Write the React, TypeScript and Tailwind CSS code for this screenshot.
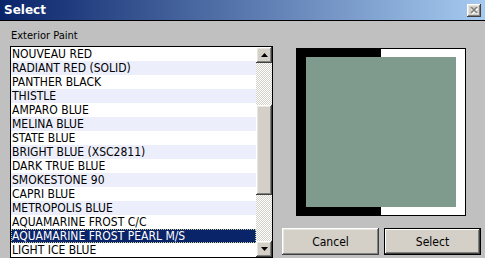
import React from 'react';

const paints = [
  'NOUVEAU RED',
  'RADIANT RED (SOLID)',
  'PANTHER BLACK',
  'THISTLE',
  'AMPARO BLUE',
  'MELINA BLUE',
  'STATE BLUE',
  'BRIGHT BLUE (XSC2811)',
  'DARK TRUE BLUE',
  'SMOKESTONE 90',
  'CAPRI BLUE',
  'METROPOLIS BLUE',
  'AQUAMARINE FROST C/C',
  'AQUAMARINE FROST PEARL M/S',
  'LIGHT ICE BLUE',
];

const selectedIndex = 13;

const bevel =
  'shadow-[inset_-1px_-1px_#404040,inset_1px_1px_#ffffff,inset_-2px_-2px_#808080,inset_2px_2px_#e8e6e0]';

const ScrollArrow: React.FC<{ up?: boolean }> = ({ up }) => (
  <div className={`w-[16px] h-[16px] bg-[#d4d0c8] flex items-center justify-center ${bevel}`}>
    <svg width="7" height="4" viewBox="0 0 7 4">
      {up ? <path d="M3.5 0 L7 4 L0 4 Z" fill="#000" /> : <path d="M0 0 L7 0 L3.5 4 Z" fill="#000" />}
    </svg>
  </div>
);

export default function App() {
  return (
    <div className="w-[485px] h-[258px] bg-[#c0c0c0] flex flex-col overflow-hidden font-['DejaVu_Sans_Condensed','DejaVu_Sans',sans-serif] font-stretch-condensed text-black">
      {/* title bar */}
      <div className="h-[20px] shrink-0 flex items-center justify-between pl-[4px] pr-[4px] bg-[linear-gradient(to_right,#0a246a,#a6caf0)] border-b border-black box-content">
        <span className="text-white font-bold text-[12px] font-['DejaVu_Sans',sans-serif] font-stretch-normal leading-none">Select</span>
        <div className={`w-[14px] h-[13px] bg-[#d4d0c8] flex items-center justify-center ${bevel}`}>
          <svg width="8" height="7" viewBox="0 0 8 7">
            <path d="M1 1 L7 7 M7 1 L1 7" stroke="#ffffff" strokeWidth="1.6" transform="translate(0.6 0.4)" />
            <path d="M1 0 L7 6 M7 0 L1 6" stroke="#808080" strokeWidth="1.6" />
          </svg>
        </div>
      </div>

      <div className="flex flex-1">
        {/* list column */}
        <div className="pl-[10px] pt-[7px] flex flex-col">
          <div className="text-[11px] leading-[16px] h-[18px] pl-[1px]">Exterior Paint</div>
          <div className="w-[263px] h-[212px] border border-black bg-white flex">
            <div className="flex-1 flex flex-col">
              {paints.map((name, i) => (
                <div
                  key={name}
                  className={`h-[14px] text-[12px] leading-[14px] whitespace-nowrap pl-[1px] ${
                    i === selectedIndex
                      ? 'bg-[#0a246a] text-white outline-1 outline-dotted outline-[#c8c89a] -outline-offset-1'
                      : i % 2 === 1
                        ? 'bg-[#eceefb]'
                        : 'bg-white'
                  }`}
                >
                  {name}
                </div>
              ))}
            </div>
            <div className="w-[16px] flex flex-col bg-[repeating-conic-gradient(#ffffff_0%_25%,#d4d0c8_0%_50%)] bg-[length:2px_2px]">
              <ScrollArrow up />
              <div className="h-[42px]" />
              <div className={`h-[90px] bg-[#d4d0c8] ${bevel}`} />
              <div className="flex-1" />
              <ScrollArrow />
            </div>
          </div>
        </div>

        {/* preview column */}
        <div className="flex-1 flex flex-col pl-[9px] pt-[27px]">
          <div className="ml-[14px] w-[170px] h-[168px] border border-black bg-[linear-gradient(to_right,#000000_50%,#ffffff_50%)] pl-[9px] pt-[8px]">
            <div className="w-[150px] h-[150px] bg-[#7e9b8d]" />
          </div>
          <div className="flex gap-[5px] mt-[12px]">
            <button className={`w-[97px] h-[27px] bg-[#d4d0c8] text-[12px] ${bevel}`}>Cancel</button>
            <button className="w-[97px] h-[27px] border border-black bg-[#d4d0c8] text-[12px] shadow-[inset_-1px_-1px_#404040,inset_1px_1px_#ffffff,inset_-2px_-2px_#808080]">
              Select
            </button>
          </div>
        </div>
      </div>
    </div>
  );
}
